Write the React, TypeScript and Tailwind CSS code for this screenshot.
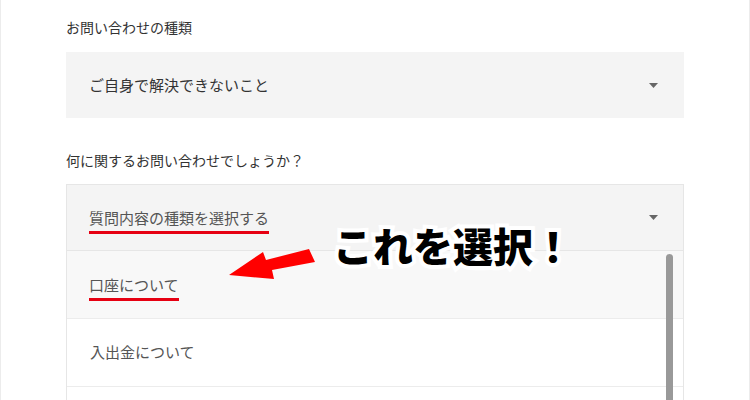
import React from 'react';

const jp = { fontFamily: '"Noto Sans CJK JP", "Noto Sans", sans-serif' };

function Caret() {
  return (
    <svg width="9" height="5" viewBox="0 0 9 5" className="shrink-0">
      <path d="M0 0 L9 0 L4.5 5 Z" fill="#666" />
    </svg>
  );
}

export default function App() {
  return (
    <div
      className="relative h-[400px] w-[750px] overflow-hidden border-x border-[#ececec] bg-white text-[#333]"
      style={jp}
    >
      <div className="pl-[65px] pr-[65px] pt-[17px]">
        {/* お問い合わせの種類 */}
        <p className="text-[14px] leading-[20px]">お問い合わせの種類</p>
        <div className="mt-[15px] flex h-[66px] items-center justify-between bg-[#f4f4f4] pl-[23px] pr-[26px]">
          <span className="text-[15px] text-[#333]">ご自身で解決できないこと</span>
          <Caret />
        </div>

        {/* 何に関する */}
        <p className="mt-[32px] text-[14px] leading-[20px]">何に関するお問い合わせでしょうか？</p>
        <div className="mt-[14px] border border-[#e6e6e6]">
          <div className="flex h-[65px] items-center justify-between bg-[#f4f4f4] pl-[22px] pr-[25px]">
            <span className="mt-[6px] border-b-[3px] border-[#e60012] pb-[3px] text-[15px] leading-[20px] text-[#555]">
              質問内容の種類を選択する
            </span>
            <Caret />
          </div>
          <div className="relative border-t border-[#e6e6e6]">
            <div className="flex h-[68px] items-center border-b border-[#ececec] bg-[#f8f8f8] pl-[22px]">
              <span className="mt-[6px] border-b-[3px] border-[#e60012] pb-[3px] text-[15px] leading-[20px] text-[#555]">
                口座について
              </span>
            </div>
            <div className="flex h-[68px] items-center border-b border-[#ececec] bg-white pl-[23px]">
              <span className="text-[15px] text-[#555]">入出金について</span>
            </div>
            <div className="h-[68px] bg-white" />
            <div className="absolute right-[10px] top-[3px] h-[200px] w-[7px] rounded-full bg-[#999]" />
          </div>
        </div>
      </div>

      {/* annotation arrow */}
      <svg
        className="absolute left-[224px] top-[246px]"
        width="95"
        height="38"
        viewBox="0 0 95 38"
      >
        <polygon
          points="4,29 38,6 41,14 84,3 90,16 47,24 49,33"
          fill="#f00"
        />
      </svg>

      {/* annotation text */}
      <div
        className="absolute left-[332px] top-[224px] text-[40px] font-black leading-[42px] text-black [-webkit-text-stroke:8px_white] [paint-order:stroke_fill]"
        style={jp}
      >
        これを選択！
      </div>
    </div>
  );
}
